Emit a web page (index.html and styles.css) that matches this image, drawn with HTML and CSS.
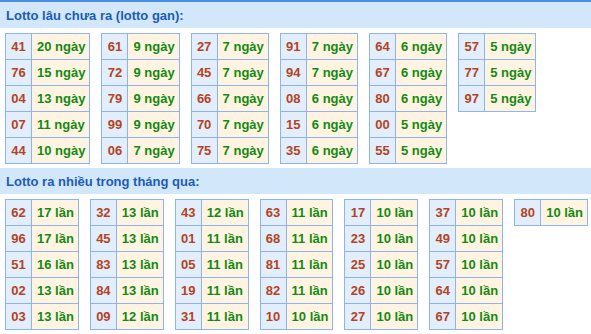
FILE: index.html
```html
<!DOCTYPE html>
<html>
<head>
<meta charset="utf-8">
<link rel="stylesheet" href="styles.css">
</head>
<body>
<div class="topline"></div>
<div class="section">
  <div class="head">Lotto lâu chưa ra (lotto gan):</div>
  <div class="tables">
    <table class="t"><tr><td class="n">41</td><td class="v">20 ngày</td></tr><tr><td class="n">76</td><td class="v">15 ngày</td></tr><tr><td class="n">04</td><td class="v">13 ngày</td></tr><tr><td class="n">07</td><td class="v">11 ngày</td></tr><tr><td class="n">44</td><td class="v">10 ngày</td></tr></table>
    <table class="t"><tr><td class="n">61</td><td class="v">9 ngày</td></tr><tr><td class="n">72</td><td class="v">9 ngày</td></tr><tr><td class="n">79</td><td class="v">9 ngày</td></tr><tr><td class="n">99</td><td class="v">9 ngày</td></tr><tr><td class="n">06</td><td class="v">7 ngày</td></tr></table>
    <table class="t"><tr><td class="n">27</td><td class="v">7 ngày</td></tr><tr><td class="n">45</td><td class="v">7 ngày</td></tr><tr><td class="n">66</td><td class="v">7 ngày</td></tr><tr><td class="n">70</td><td class="v">7 ngày</td></tr><tr><td class="n">75</td><td class="v">7 ngày</td></tr></table>
    <table class="t"><tr><td class="n">91</td><td class="v">7 ngày</td></tr><tr><td class="n">94</td><td class="v">7 ngày</td></tr><tr><td class="n">08</td><td class="v">6 ngày</td></tr><tr><td class="n">15</td><td class="v">6 ngày</td></tr><tr><td class="n">35</td><td class="v">6 ngày</td></tr></table>
    <table class="t"><tr><td class="n">64</td><td class="v">6 ngày</td></tr><tr><td class="n">67</td><td class="v">6 ngày</td></tr><tr><td class="n">80</td><td class="v">6 ngày</td></tr><tr><td class="n">00</td><td class="v">5 ngày</td></tr><tr><td class="n">55</td><td class="v">5 ngày</td></tr></table>
    <table class="t"><tr><td class="n">57</td><td class="v">5 ngày</td></tr><tr><td class="n">77</td><td class="v">5 ngày</td></tr><tr><td class="n">97</td><td class="v">5 ngày</td></tr></table>
  </div>
</div>
<div class="section">
  <div class="head">Lotto ra nhiều trong tháng qua:</div>
  <div class="tables">
    <table class="t"><tr><td class="n">62</td><td class="v">17 lần</td></tr><tr><td class="n">96</td><td class="v">17 lần</td></tr><tr><td class="n">51</td><td class="v">16 lần</td></tr><tr><td class="n">02</td><td class="v">13 lần</td></tr><tr><td class="n">03</td><td class="v">13 lần</td></tr></table>
    <table class="t"><tr><td class="n">32</td><td class="v">13 lần</td></tr><tr><td class="n">45</td><td class="v">13 lần</td></tr><tr><td class="n">83</td><td class="v">13 lần</td></tr><tr><td class="n">84</td><td class="v">13 lần</td></tr><tr><td class="n">09</td><td class="v">12 lần</td></tr></table>
    <table class="t"><tr><td class="n">43</td><td class="v">12 lần</td></tr><tr><td class="n">01</td><td class="v">11 lần</td></tr><tr><td class="n">05</td><td class="v">11 lần</td></tr><tr><td class="n">19</td><td class="v">11 lần</td></tr><tr><td class="n">31</td><td class="v">11 lần</td></tr></table>
    <table class="t"><tr><td class="n">63</td><td class="v">11 lần</td></tr><tr><td class="n">68</td><td class="v">11 lần</td></tr><tr><td class="n">81</td><td class="v">11 lần</td></tr><tr><td class="n">82</td><td class="v">11 lần</td></tr><tr><td class="n">10</td><td class="v">10 lần</td></tr></table>
    <table class="t"><tr><td class="n">17</td><td class="v">10 lần</td></tr><tr><td class="n">23</td><td class="v">10 lần</td></tr><tr><td class="n">25</td><td class="v">10 lần</td></tr><tr><td class="n">26</td><td class="v">10 lần</td></tr><tr><td class="n">27</td><td class="v">10 lần</td></tr></table>
    <table class="t"><tr><td class="n">37</td><td class="v">10 lần</td></tr><tr><td class="n">49</td><td class="v">10 lần</td></tr><tr><td class="n">57</td><td class="v">10 lần</td></tr><tr><td class="n">64</td><td class="v">10 lần</td></tr><tr><td class="n">67</td><td class="v">10 lần</td></tr></table>
    <table class="t"><tr><td class="n">80</td><td class="v">10 lần</td></tr></table>
  </div>
</div>
</body>
</html>
```
FILE: styles.css
```css
html, body {
  margin: 0;
  padding: 0;
  background: #ffffff;
  font-family: "Liberation Sans", Arial, sans-serif;
}
.topline {
  height: 2px;
  background: #4a90e2;
}
.head {
  height: 26px;
  line-height: 27px;
  background: #d3e7fb;
  color: #1a5cb8;
  font-weight: bold;
  font-size: 13px;
  padding-left: 6px;
}
.tables {
  display: flex;
  align-items: flex-start;
  gap: 11px;
  padding: 5px 0 4px 5px;
}
.t {
  border-collapse: collapse;
  font-size: 13px;
  font-weight: bold;
}
.t td {
  border: 1px solid #8eb4ef;
  height: 25px;
  padding: 0 4px 0 5px;
  white-space: nowrap;
}
.t .n {
  background: #e2eefc;
  color: #b4441e;
  text-align: center;
  padding: 0 5px;
  width: 15px;
}
.t .v {
  background: #fff4e2;
  color: #138a13;
}
```
